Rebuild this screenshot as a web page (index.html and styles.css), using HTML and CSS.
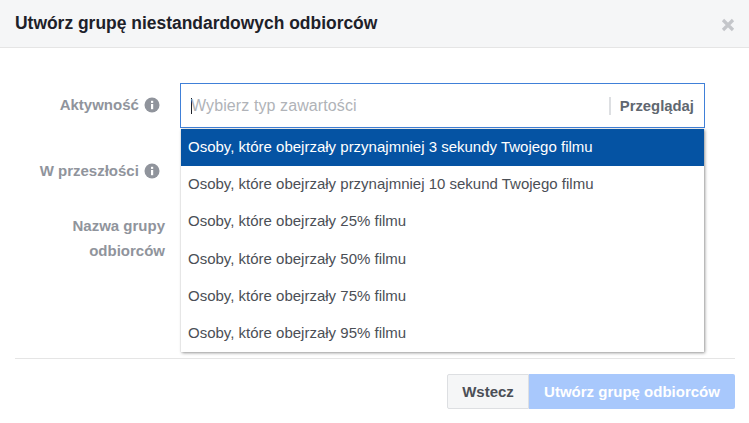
FILE: index.html
```html
<!DOCTYPE html>
<html lang="pl">
<head>
<meta charset="utf-8">
<title>Utwórz grupę niestandardowych odbiorców</title>
<link rel="stylesheet" href="styles.css">
</head>
<body>
<div class="dialog">
  <header class="head">
    <h1 class="title">Utwórz grupę niestandardowych odbiorców</h1>
    <svg class="close" width="14" height="14" viewBox="0 0 14 14"><path d="M2 2 12 12M12 2 2 12" stroke="#c4c6ca" stroke-width="3.2" fill="none"/></svg>
  </header>
  <main class="body">
    <div class="labels">
      <div class="label row-a">Aktywność
        <svg class="info" width="16" height="16" viewBox="0 0 16 16"><circle cx="8" cy="8" r="7.5" fill="#90949c"/><rect x="7" y="7" width="2.2" height="5.2" fill="#fff"/><rect x="7" y="3.8" width="2.2" height="2.1" fill="#fff"/></svg>
      </div>
      <div class="label row-b">W przeszłości
        <svg class="info" width="16" height="16" viewBox="0 0 16 16"><circle cx="8" cy="8" r="7.5" fill="#90949c"/><rect x="7" y="7" width="2.2" height="5.2" fill="#fff"/><rect x="7" y="3.8" width="2.2" height="2.1" fill="#fff"/></svg>
      </div>
      <div class="label row-c">Nazwa grupy<br>odbiorców</div>
    </div>
    <div class="field">
      <div class="input">
        <span class="caret"></span>
        <span class="placeholder">Wybierz typ zawartości</span>
        <span class="browse">Przeglądaj</span>
      </div>
      <ul class="menu">
        <li class="item active">Osoby, które obejrzały przynajmniej 3 sekundy Twojego filmu</li>
        <li class="item">Osoby, które obejrzały przynajmniej 10 sekund Twojego filmu</li>
        <li class="item">Osoby, które obejrzały 25% filmu</li>
        <li class="item">Osoby, które obejrzały 50% filmu</li>
        <li class="item">Osoby, które obejrzały 75% filmu</li>
        <li class="item">Osoby, które obejrzały 95% filmu</li>
      </ul>
    </div>
  </main>
  <footer class="foot">
    <button class="btn back">Wstecz</button>
    <button class="btn create">Utwórz grupę odbiorców</button>
  </footer>
</div>
</body>
</html>
```
FILE: styles.css
```css
* { box-sizing: border-box; }
html, body { margin: 0; height: 100%; background: #fff; }
body { font-family: "Liberation Sans", Arial, sans-serif; overflow: hidden; }
.dialog { width: 749px; height: 423px; display: flex; flex-direction: column; }
.head {
  height: 48px; flex: none; display: flex; align-items: center; justify-content: space-between;
  padding: 0 14px 0 15px; background: #f5f6f7; border-bottom: 1px solid #e5e5e5;
}
.title { margin: 0; font-size: 17.45px; font-weight: 700; color: #1d2129; }
.close { display: block; margin-top: 3px; }
.body { height: 310px; flex: none; display: flex; padding: 35px 44px 0 0; }
.labels { width: 180px; flex: none; padding-right: 15px; }
.label { font-size: 15px; font-weight: 700; color: #90949c; text-align: right; line-height: 26px; }
.info { vertical-align: -3px; margin-left: 1px; }
.row-a { padding: 9px 5px 0 0; height: 75px; }
.row-b { height: 47px; padding-right: 5px; }
.row-c { line-height: 25px; padding-top: 8px; }
.field { position: relative; flex: 1; }
.input {
  height: 45px; display: flex; align-items: center; padding: 0 10px;
  border: 1px solid #4080d8; background: #fff; font-size: 15px;
}
.caret { width: 1px; height: 16px; background: #1d2129; flex: none; margin-right: -1px; }
.placeholder { flex: 1; color: #b0b3b8; font-size: 16px; letter-spacing: .1px; }
.browse { font-weight: 700; font-size: 14.85px; color: #606770; border-left: 2px solid #dddfe2; padding-left: 9px; line-height: 18px; }
.menu {
  position: absolute; top: 46px; left: 1px; right: 1px; margin: 0; padding: 0; list-style: none;
  height: 223px; background: #fff; box-shadow: 1px 1px 3px rgba(0,0,0,.4), 0 0 1px rgba(0,0,0,.2);
}
.item { height: 37.2px; line-height: 35.6px; padding-left: 7px; font-size: 15px; color: #4b4f56; white-space: nowrap; }
.item.active { background: #0553a3; color: #fff; }
.foot { flex: 1; display: flex; justify-content: flex-end; align-items: flex-start; margin: 0 14px 0 15px; padding-top: 15px; border-top: 1px solid #e5e5e5; }
.btn { height: 35px; font: 700 15px "Liberation Sans", Arial, sans-serif; padding: 0; }
.back { width: 82px; background: #f5f6f7; border: 1px solid #dddfe2; color: #4b4f56; border-radius: 2px 0 0 2px; }
.create { width: 206px; background: #a8c8fc; border: 0; color: #fff; border-radius: 0 2px 2px 0; }
```
